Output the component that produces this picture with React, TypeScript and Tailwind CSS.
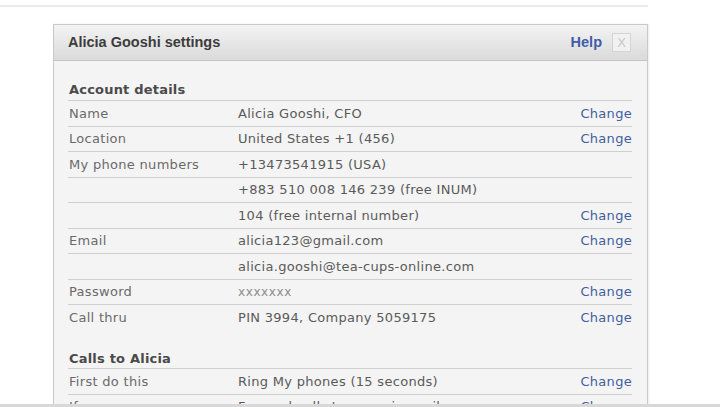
import * as React from 'react'

type Row = {
  label?: string
  value: string
  change?: boolean
  muted?: boolean
}

const accountRows: Row[] = [
  { label: 'Name', value: 'Alicia Gooshi, CFO', change: true },
  { label: 'Location', value: 'United States +1 (456)', change: true },
  { label: 'My phone numbers', value: '+13473541915 (USA)' },
  { value: '+883 510 008 146 239 (free INUM)' },
  { value: '104 (free internal number)', change: true },
  { label: 'Email', value: 'alicia123@gmail.com', change: true },
  { value: 'alicia.gooshi@tea-cups-online.com' },
  { label: 'Password', value: 'xxxxxxx', change: true, muted: true },
  { label: 'Call thru', value: 'PIN 3994, Company 5059175', change: true },
]

const callRows: Row[] = [
  { label: 'First do this', value: 'Ring My phones (15 seconds)', change: true },
  { label: 'If no answer', value: 'Forward calls to my voicemail', change: true },
]

function SettingsRow({ row }: { row: Row }) {
  return (
    <div className="flex h-[25.5px] items-center border-t border-[#cfcfcf] text-[13px] leading-none tracking-[0.3px]">
      <span className="w-[170px] shrink-0 pl-[1px] text-[#6a6a6a]">{row.label}</span>
      <span
        className={
          'flex-1 ' + (row.muted ? 'text-[12px] tracking-[0.6px] text-[#8c8c8c]' : 'text-[#5a5a5a]')
        }
      >
        {row.value}
      </span>
      {row.change && <span className="text-[#41609e]">Change</span>}
    </div>
  )
}

function SectionHeading({ title, top }: { title: string; top: string }) {
  return (
    <div
      className={
        'h-[18px] pl-[1px] text-[13px] font-bold leading-[18px] tracking-[0.2px] text-[#4a4a4a] ' + top
      }
    >
      {title}
    </div>
  )
}

export default function App() {
  return (
    <div className="relative h-[407px] w-[720px] overflow-hidden bg-white font-['DejaVu_Sans',Verdana,sans-serif]">
      <div className="mt-[5px] h-[2px] w-[648px] bg-[#ebebeb]" />
      <div className="ml-[53px] mt-[17px] w-[595px] border border-[#c9c9c9] bg-[#f4f4f4] shadow-[1px_0_2px_rgba(0,0,0,0.08)]">
        <div className="flex h-[36px] items-center border-b border-[#c6c6c6] bg-gradient-to-b from-[#f3f3f3] to-[#dadada] pl-[14px] pr-[16px] font-['Liberation_Sans',Arial,sans-serif]">
          <span className="flex-1 text-[14.5px] font-bold text-[#3c3c3c]">Alicia Gooshi settings</span>
          <span className="mr-[10px] text-[14.5px] font-bold text-[#3f5ca8]">Help</span>
          <span className="flex h-[19px] w-[19px] items-center justify-center border border-[#d4d4d4] bg-[#f1f1f1] text-[13px] text-[#c6c6c6]">
            X
          </span>
        </div>
        <div className="pb-6 pl-[14px] pr-[15px]">
          <SectionHeading title="Account details" top="mt-[20px] mb-[1px]" />
          {accountRows.map((row, i) => (
            <SettingsRow key={i} row={row} />
          ))}
          <SectionHeading title="Calls to Alicia" top="mt-[20px] mb-[0.5px]" />
          {callRows.map((row, i) => (
            <SettingsRow key={i} row={row} />
          ))}
        </div>
      </div>
      <div className="absolute bottom-0 left-0 h-[3px] w-full bg-[#d8d8d8]" />
    </div>
  )
}
